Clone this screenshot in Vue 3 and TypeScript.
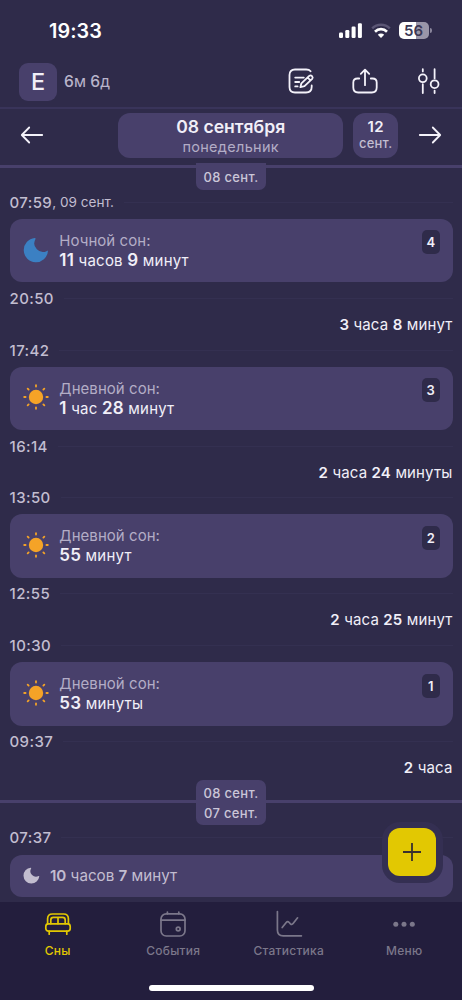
<script setup lang="ts">
interface Part { t: string; b?: boolean }
interface Sleep {
  end: string
  endNote?: string
  start: string
  title: string
  night: boolean
  index: number
  duration: Part[]
  awake: Part[]
}

const sleeps: Sleep[] = [
  {
    end: '07:59', endNote: ', 09 сент.', start: '20:50', title: 'Ночной сон:', night: true, index: 4,
    duration: [{ t: '11', b: true }, { t: ' часов ' }, { t: '9', b: true }, { t: ' минут' }],
    awake: [{ t: '3', b: true }, { t: ' часа ' }, { t: '8', b: true }, { t: ' минут' }],
  },
  {
    end: '17:42', start: '16:14', title: 'Дневной сон:', night: false, index: 3,
    duration: [{ t: '1', b: true }, { t: ' час ' }, { t: '28', b: true }, { t: ' минут' }],
    awake: [{ t: '2', b: true }, { t: ' часа ' }, { t: '24', b: true }, { t: ' минуты' }],
  },
  {
    end: '13:50', start: '12:55', title: 'Дневной сон:', night: false, index: 2,
    duration: [{ t: '55', b: true }, { t: ' минут' }],
    awake: [{ t: '2', b: true }, { t: ' часа ' }, { t: '25', b: true }, { t: ' минут' }],
  },
  {
    end: '10:30', start: '09:37', title: 'Дневной сон:', night: false, index: 1,
    duration: [{ t: '53', b: true }, { t: ' минуты' }],
    awake: [{ t: '2', b: true }, { t: ' часа' }],
  },
]

const rays = [0, 45, 90, 135, 180, 225, 270, 315]
const moon = 'M11.8 1.1A12.1 12.1 0 1 0 24.9 14.2Q25 13.2 24 13.9A8.6 8.6 0 0 1 12.4 2.2Q13 1 11.8 1.1Z'
</script>

<template>
  <div class="screen">
    <div class="status">
      <span class="clock">19:33</span>
      <div class="indicators">
        <svg width="24" height="16" viewBox="0 0 24 16" fill="#fff">
          <rect x="0" y="9.5" width="4" height="5.5" rx="1.2" />
          <rect x="6.3" y="7" width="4" height="8" rx="1.2" />
          <rect x="12.6" y="3.6" width="4" height="11.4" rx="1.2" />
          <rect x="18.9" y="0.2" width="4" height="14.8" rx="1.2" />
        </svg>
        <svg class="wifi" width="20" height="16" viewBox="0 0 20 16" fill="none">
          <path d="M1.2 5.4a12.6 12.6 0 0 1 17.6 0" stroke="#5b5675" stroke-width="2.5" />
          <path d="M4 8.7a8.5 8.5 0 0 1 12 0" stroke="#fff" stroke-width="2.7" />
          <path d="M10 15L6.8 11.8a4.6 4.6 0 0 1 6.4 0Z" fill="#fff" />
        </svg>
        <div class="battery"><span>56</span></div>
        <i class="battery-tip"></i>
      </div>
    </div>

    <header class="header">
      <div class="avatar">Е</div>
      <div class="age"><b>6</b>м <b>6</b>д</div>
      <div class="tools">
        <svg width="28" height="28" viewBox="0 0 28 28">
          <path d="M23.6 4.3Q22.2 2.5 19.2 2.5H8Q2.5 2.5 2.5 8V20Q2.5 25.5 8 25.5H19Q24.7 25.5 24.7 19.8V18.4" />
          <path d="M8.2 10.6H16.8M8.2 15H12.2M8.2 19.4H10.6" />
          <path d="M13.4 20.2L14.4 16.3L22.2 8.9Q23.7 7.8 25 9.1Q26.3 10.5 25.2 11.9L17.5 19.2Z M20.7 10.6L23.5 13.3" />
        </svg>
        <svg width="28" height="28" viewBox="0 0 28 28">
          <path d="M8.2 11.5H6.5Q2.3 11.5 2.3 15.5V20.5Q2.3 25.5 7.2 25.5H20.8Q25.7 25.5 25.7 20.5V15.5Q25.7 11.5 21.5 11.5H19.8" />
          <path d="M14 18.2V2.8M9.8 6.8L14 2.6L18.2 6.8" />
        </svg>
        <svg width="28" height="28" viewBox="0 0 28 28">
          <path d="M7.8 2.2V4.4M7.8 17.2V26M19.6 2.2V11.4M19.6 23.6V26" />
          <circle cx="7.8" cy="11.3" r="3.9" />
          <circle cx="19.6" cy="17.2" r="3.9" />
        </svg>
      </div>
    </header>

    <nav class="days">
      <svg class="arrow" width="24" height="20" viewBox="0 0 24 20"><path d="M22.2 10H2M9.2 2.5L1.8 10L9.2 17.5" /></svg>
      <div class="day">
        <div class="date">08 сентября</div>
        <div class="weekday">понедельник</div>
      </div>
      <div class="next">
        <div class="next-num">12</div>
        <div class="next-month">сент.</div>
      </div>
      <svg class="arrow" width="24" height="20" viewBox="0 0 24 20"><path d="M1.8 10H22M14.8 2.5L22.2 10L14.8 17.5" /></svg>
    </nav>

    <main class="timeline">
      <div class="tab">08 сент.</div>
      <section v-for="s in sleeps" :key="s.index" class="entry">
        <div class="time"><b>{{ s.end }}</b><small v-if="s.endNote">{{ s.endNote }}</small></div>
        <article class="card">
          <svg class="glyph" width="26" height="26" viewBox="0 0 26 26">
            <path v-if="s.night" :d="moon" fill="#3b80c3" />
            <g v-else fill="#f5a327" stroke="#f5a327">
              <circle cx="13" cy="13" r="7.2" stroke="none" />
              <path v-for="r in rays" :key="r" d="M13 1.2V2.6" stroke-width="1.8" stroke-linecap="round" :transform="`rotate(${r} 13 13)`" />
            </g>
          </svg>
          <div class="info">
            <div class="title">{{ s.title }}</div>
            <div class="duration"><span v-for="(p, i) in s.duration" :key="i" :class="{ num: p.b }">{{ p.t }}</span></div>
          </div>
          <div class="index">{{ s.index }}</div>
        </article>
        <div class="time"><b>{{ s.start }}</b></div>
        <div class="awake"><span v-for="(p, i) in s.awake" :key="i" :class="{ num: p.b }">{{ p.t }}</span></div>
      </section>
      <div class="divider"><div class="divider-label"><span>08 сент.</span><span>07 сент.</span></div></div>
      <div class="time"><b>07:37</b></div>
      <article class="card small">
        <svg width="17" height="17" viewBox="0 0 26 26"><path :d="moon" fill="#c2bdcf" /></svg>
        <div class="past"><b>10</b> часов <b>7</b> минут</div>
      </article>
    </main>

    <button class="add" aria-label="Добавить">
      <svg width="20" height="20" viewBox="0 0 20 20"><path d="M10 1V19M1 10H19" /></svg>
    </button>

    <footer class="tabs">
      <div class="tab-item active">
        <svg width="28" height="28" viewBox="0 0 28 28">
          <path d="M3.6 13.8V8.8Q3.6 4 8.4 4H19.6Q24.4 4 24.4 8.8V13.8" />
          <path d="M6.8 13.6V10Q6.8 7.4 9.4 7.4H18.6Q21.2 7.4 21.2 10V13.6M14 7.4V13.6" />
          <rect x="1.8" y="13.8" width="24.4" height="7.4" rx="2.6" />
          <path d="M5.2 21.2V24.2M22.8 21.2V24.2" />
        </svg>
        <span>Сны</span>
      </div>
      <div class="tab-item">
        <svg width="28" height="28" viewBox="0 0 28 28">
          <rect x="2" y="3.8" width="24" height="22.2" rx="5.2" />
          <path d="M2 10.2H26M8.4 2V3.8M19.8 2V3.8" />
          <circle cx="19.2" cy="19" r="1.9" />
        </svg>
        <span>События</span>
      </div>
      <div class="tab-item">
        <svg width="28" height="28" viewBox="0 0 28 28">
          <path d="M2.4 1.6V20Q2.4 25.8 8.2 25.8H26.4" />
          <path d="M7.2 17.6L11.2 12.5Q12.6 10.9 14.2 12.5L15.4 13.8Q16.9 15.2 18.1 13.6L22.6 7.8" />
        </svg>
        <span>Статистика</span>
      </div>
      <div class="tab-item">
        <svg width="28" height="28" viewBox="0 0 28 28" class="dots">
          <circle cx="5.8" cy="14.2" r="2.5" /><circle cx="14" cy="14.2" r="2.5" /><circle cx="22.3" cy="14.2" r="2.5" />
        </svg>
        <span>Меню</span>
      </div>
      <div class="home"></div>
    </footer>
  </div>
</template>

<style>
body { background: #2f2b4a; }
</style>

<style scoped>
* { box-sizing: border-box; }
.screen {
  position: relative;
  display: flex;
  flex-direction: column;
  width: 462px;
  height: 1000px;
  overflow: hidden;
  background: #2f2b4a;
  color: #f1eff8;
  font-family: Inter, "Noto Sans", sans-serif;
}
svg { display: block; flex: none; }
b, .num { font-weight: 600; }
.status {
  flex: none;
  display: flex;
  align-items: center;
  justify-content: space-between;
  height: 57px;
  padding: 4px 30.5px 0 49px;
}
.clock { font-size: 19.8px; font-weight: 600; color: #fff; letter-spacing: 0.1px; }
.indicators { display: flex; align-items: center; }
.wifi { margin-left: 7.5px; }
.battery {
  width: 30px;
  height: 17px;
  margin-left: 8px;
  border-radius: 5px;
  background: linear-gradient(90deg, #fff 56%, #9995a8 56%);
  color: #3b3755;
  font-size: 15px;
  line-height: 17px;
  font-weight: 600;
  text-align: center;
}
.battery-tip { width: 2px; height: 5px; margin-left: 1px; border-radius: 0 2px 2px 0; background: #8a869c; }
.header {
  flex: none;
  display: flex;
  align-items: center;
  height: 52px;
  padding: 0 19px 2px;
  border-bottom: 2px solid #39345a;
}
.avatar {
  width: 38px;
  height: 38px;
  margin-top: 1px;
  border-radius: 9px;
  background: #48406b;
  font-size: 23.5px;
  line-height: 38px;
  font-weight: 500;
  text-align: center;
}
.age { margin-left: 7px; margin-top: 1px; font-size: 15.6px; color: #b9b4ca; }
.age b { font-weight: 500; letter-spacing: 0.1px; }
.tools { display: flex; gap: 36px; margin-left: auto; }
.tools svg, .arrow { fill: none; stroke: #f4f2fa; stroke-width: 1.8; stroke-linecap: round; stroke-linejoin: round; }
.days {
  flex: none;
  display: flex;
  align-items: center;
  height: 59px;
  padding: 0 20px 4px;
  border-bottom: 3px solid #48406b;
}
.day {
  width: 225px;
  height: 45px;
  margin: 0 10px 0 74.2px;
  padding-top: 3px;
  border-radius: 12px;
  background: #48406b;
  text-align: center;
}
.date { font-size: 17.6px; line-height: 22px; font-weight: 600; }
.weekday { font-size: 14.5px; line-height: 17px; color: #b3adc6; letter-spacing: 0.3px; }
.next {
  width: 45px;
  height: 45px;
  margin-right: auto;
  padding-top: 5px;
  border-radius: 12px;
  background: #48406b;
  text-align: center;
}
.next-num { font-size: 15px; line-height: 18px; font-weight: 600; letter-spacing: 0.4px; }
.next-month { font-size: 13px; line-height: 15px; font-weight: 500; color: #c2bdd0; letter-spacing: 0.2px; }
.timeline { flex: 1; min-height: 0; padding: 0 9.5px; }
.tab {
  width: 70.5px;
  height: 27px;
  margin: -5.5px auto 2.8px;
  border-radius: 0 0 7px 7px;
  background: #48406b;
  color: #cbc6d8;
  font-size: 13px;
  line-height: 28px;
  font-weight: 500;
  text-align: center;
  letter-spacing: 0.3px;
}
.entry { height: 147.75px; }
.time {
  display: flex;
  align-items: center;
  height: 20px;
  font-size: 15px;
  color: #c2bdd0;
  white-space: pre;
}
.time b { letter-spacing: 0.4px; font-weight: 550; }
.time small { font-size: 13.6px; }
.time::after { content: ""; flex: 1; height: 1px; margin-left: 10px; background: #343051; }
.card {
  display: flex;
  height: 63.5px;
  margin: 6.7px 0 6px;
  padding: 0 12.5px 0 13px;
  border-radius: 12px;
  background: #48406b;
}
.glyph { margin-top: 17.7px; }
.info { flex: 1; margin-left: 10.8px; padding-top: 12px; }
.title { font-size: 15px; line-height: 19px; letter-spacing: 0.05px; color: #b3adc6; }
.duration { font-size: 15px; line-height: 21px; letter-spacing: 0.22px; white-space: pre; }
.duration .num { font-size: 17px; }
.index {
  width: 18.5px;
  height: 24px;
  margin-top: 11.5px;
  border-radius: 5px;
  background: #2f2b4a;
  font-size: 13px;
  line-height: 24px;
  font-weight: 600;
  text-align: center;
}
.awake { margin-top: 6.5px; height: 20px; font-size: 15px; line-height: 20px; letter-spacing: 0.15px; text-align: right; white-space: pre; }
.divider {
  display: flex;
  justify-content: center;
  height: 44.7px;
  margin: 0 -9.5px;
  background: linear-gradient(#48406b, #48406b) 0 17px / 100% 3px no-repeat;
}
.divider-label {
  display: flex;
  flex-direction: column;
  width: 70.5px;
  height: 45px;
  margin-top: -3px;
  padding-top: 3px;
  border-radius: 7px;
  background: #48406b;
  color: #cbc6d8;
  font-size: 13px;
  line-height: 20px;
  font-weight: 500;
  letter-spacing: 0.3px;
  text-align: center;
}
.card.small { align-items: center; height: 42.5px; }
.past { margin-left: 10.4px; font-size: 15.2px; color: #c2bdd0; }
.add {
  position: absolute;
  left: 381.5px;
  top: 821.5px;
  display: flex;
  align-items: center;
  justify-content: center;
  width: 61px;
  height: 61px;
  padding: 0;
  border: 6.5px solid #342f52;
  border-radius: 18px;
  background: #342f52;
}
.add::before {
  content: "";
  position: absolute;
  inset: 0.5px;
  border-radius: 12px;
  background: #e2c802;
}
.add svg { position: relative; fill: none; stroke: #38302f; stroke-width: 1.8; }
.tabs {
  position: relative;
  flex: none;
  display: grid;
  grid-template-columns: repeat(4, 1fr);
  align-content: start;
  height: 98px;
  padding-top: 8px;
  background: #231e3d;
}
.tab-item { display: flex; flex-direction: column; align-items: center; color: #7b778a; }
.tab-item svg { fill: none; stroke: currentColor; stroke-width: 1.7; stroke-linecap: round; stroke-linejoin: round; }
.tab-item .dots { fill: currentColor; stroke: none; }
.tab-item span { margin-top: 5px; font-size: 12px; line-height: 16px; font-weight: 500; letter-spacing: 0.25px; }
.tab-item.active { color: #e2c802; }
.home {
  position: absolute;
  left: 148.5px;
  bottom: 9px;
  width: 165px;
  height: 6.5px;
  border-radius: 4px;
  background: #fff;
}
</style>
